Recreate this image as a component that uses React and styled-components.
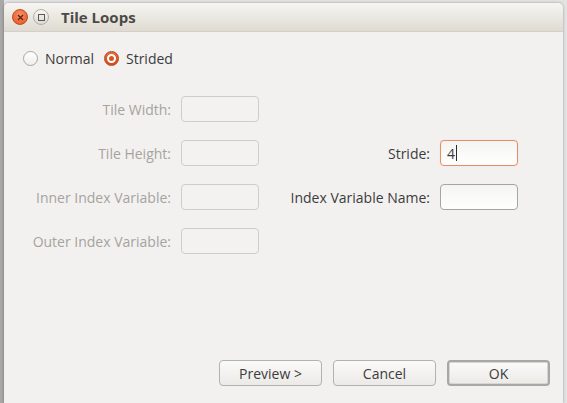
import styled, { createGlobalStyle } from "styled-components";

const GlobalStyle = createGlobalStyle`
  html, body {
    margin: 0;
    padding: 0;
    width: 567px;
    height: 403px;
    overflow: hidden;
    background: #cfcfcf;
    font-family: "Open Sans", "DejaVu Sans", sans-serif;
  }
`;

const Desktop = styled.div`
  width: 567px;
  height: 403px;
  box-sizing: border-box;
  padding: 3px 4px 0 4px;
  background: linear-gradient(to right, #a8a8a8 0, #a8a8a8 4px, #e4e4e4 4px);
`;

const Window = styled.div`
  width: 559px;
  height: 400px;
  display: flex;
  flex-direction: column;
  border-radius: 5px 5px 0 0;
  background: #f2f1f0;
  box-shadow: 0 0 3px rgba(0, 0, 0, 0.35);
  overflow: hidden;
`;

const TitleBar = styled.div`
  height: 28px;
  flex: none;
  display: flex;
  align-items: center;
  padding-left: 8px;
  gap: 5px;
  background: linear-gradient(#f6f5f1, #dfdbd2);
  border-bottom: 1px solid #d4d0c8;
`;

const CircleButton = styled.div`
  width: 16px;
  height: 16px;
  border-radius: 50%;
  display: flex;
  align-items: center;
  justify-content: center;
  box-sizing: border-box;
  background: ${(p) =>
    p.close
      ? "radial-gradient(circle at 50% 35%, #f8906a, #e0531f)"
      : "linear-gradient(#f7f6f4, #dddad4)"};
  border: 1px solid ${(p) => (p.close ? "#c74a1c" : "#b3afa8")};
`;

const Title = styled.span`
  margin-left: 7px;
  font-size: 15px;
  font-weight: 700;
  color: #4b4a47;
`;

const Body = styled.div`
  flex: 1;
  display: flex;
  flex-direction: column;
  padding: 17px 13px 17px 15px;
`;

const RadioRow = styled.div`
  display: flex;
  align-items: center;
  gap: 10px;
  height: 18px;
  padding-left: 4px;
`;

const RadioLabel = styled.label`
  display: flex;
  align-items: center;
  gap: 7px;
  font-size: 14px;
  color: #3c3c3c;
`;

const RadioDot = styled.span`
  width: 15px;
  height: 15px;
  border-radius: 50%;
  box-sizing: border-box;
  display: flex;
  align-items: center;
  justify-content: center;
  border: 1px solid ${(p) => (p.checked ? "#b9461b" : "#a9a6a1")};
  background: ${(p) =>
    p.checked ? "linear-gradient(#e86d3d, #cf4f1d)" : "linear-gradient(#ffffff, #efeeec)"};

  &::after {
    content: "";
    display: ${(p) => (p.checked ? "block" : "none")};
    width: 5px;
    height: 5px;
    border-radius: 50%;
    background: #d9561f;
    border: 2px solid #ffffff;
  }
`;

const Form = styled.div`
  margin-top: 29px;
  display: grid;
  grid-template-columns: 152px 78px 1fr 78px;
  grid-auto-rows: 26px;
  column-gap: 10px;
  row-gap: 18px;
  padding-right: 32px;
`;

const FieldLabel = styled.span`
  font-size: 14px;
  color: ${(p) => (p.disabled ? "#a6a39e" : "#3c3c3c")};
  text-align: right;
  align-self: center;
  white-space: nowrap;
`;

const Input = styled.div`
  box-sizing: border-box;
  height: 26px;
  border-radius: 4px;
  border: 1px solid
    ${(p) => (p.focused ? "#e98d67" : p.disabled ? "#cfcdc9" : "#a7a5a1")};
  background: ${(p) =>
    p.disabled ? "#f3f2f1" : "linear-gradient(#f4f4f3, #ffffff)"};
  box-shadow: ${(p) => (p.focused ? "0 0 1px #f3b89f" : "none")};
  display: flex;
  align-items: center;
  padding-left: 6px;
  font-size: 14px;
  color: #3c3c3c;
`;

const Caret = styled.span`
  display: inline-block;
  width: 1px;
  height: 16px;
  background: #2c2c2c;
  margin-left: 1px;
`;

const Spacer = styled.div`
  flex: 1;
`;

const ButtonRow = styled.div`
  display: flex;
  justify-content: flex-end;
  gap: 11px;
`;

const Button = styled.button`
  width: 103px;
  height: 26px;
  box-sizing: border-box;
  border-radius: 4px;
  font-family: inherit;
  font-size: 14px;
  color: #3c3c3c;
  background: linear-gradient(#fafaf9, #eceae7);
  border: ${(p) => (p.primary ? "2px solid #a9a7a3" : "1px solid #b4b1ac")};
  box-shadow: ${(p) => (p.primary ? "inset 0 0 0 1px #d8d6d2" : "none")};
  padding: 0;
`;

const fields = [
  ["Tile Width:", null],
  ["Tile Height:", "Stride:"],
  ["Inner Index Variable:", "Index Variable Name:"],
  ["Outer Index Variable:", null],
];

export default function App() {
  return (
    <>
      <GlobalStyle />
      <Desktop>
        <Window>
          <TitleBar>
            <CircleButton close>
              <svg width="7" height="7" viewBox="0 0 7 7">
                <path d="M1 1L6 6M6 1L1 6" stroke="#5a2410" strokeWidth="1.3" />
              </svg>
            </CircleButton>
            <CircleButton>
              <svg width="7" height="7" viewBox="0 0 7 7">
                <rect x="0.5" y="0.5" width="6" height="6" fill="none" stroke="#5d5a55" />
              </svg>
            </CircleButton>
            <Title>Tile Loops</Title>
          </TitleBar>
          <Body>
            <RadioRow>
              <RadioLabel>
                <RadioDot />
                Normal
              </RadioLabel>
              <RadioLabel>
                <RadioDot checked />
                Strided
              </RadioLabel>
            </RadioRow>
            <Form>
              {fields.map(([left, right]) => (
                <>
                  <FieldLabel disabled key={left}>{left}</FieldLabel>
                  <Input disabled />
                  {right ? <FieldLabel>{right}</FieldLabel> : <span />}
                  {right === "Stride:" ? (
                    <Input focused>
                      4<Caret />
                    </Input>
                  ) : right ? (
                    <Input />
                  ) : (
                    <span />
                  )}
                </>
              ))}
            </Form>
            <Spacer />
            <ButtonRow>
              <Button>Preview &gt;</Button>
              <Button>Cancel</Button>
              <Button primary>OK</Button>
            </ButtonRow>
          </Body>
        </Window>
      </Desktop>
    </>
  );
}
